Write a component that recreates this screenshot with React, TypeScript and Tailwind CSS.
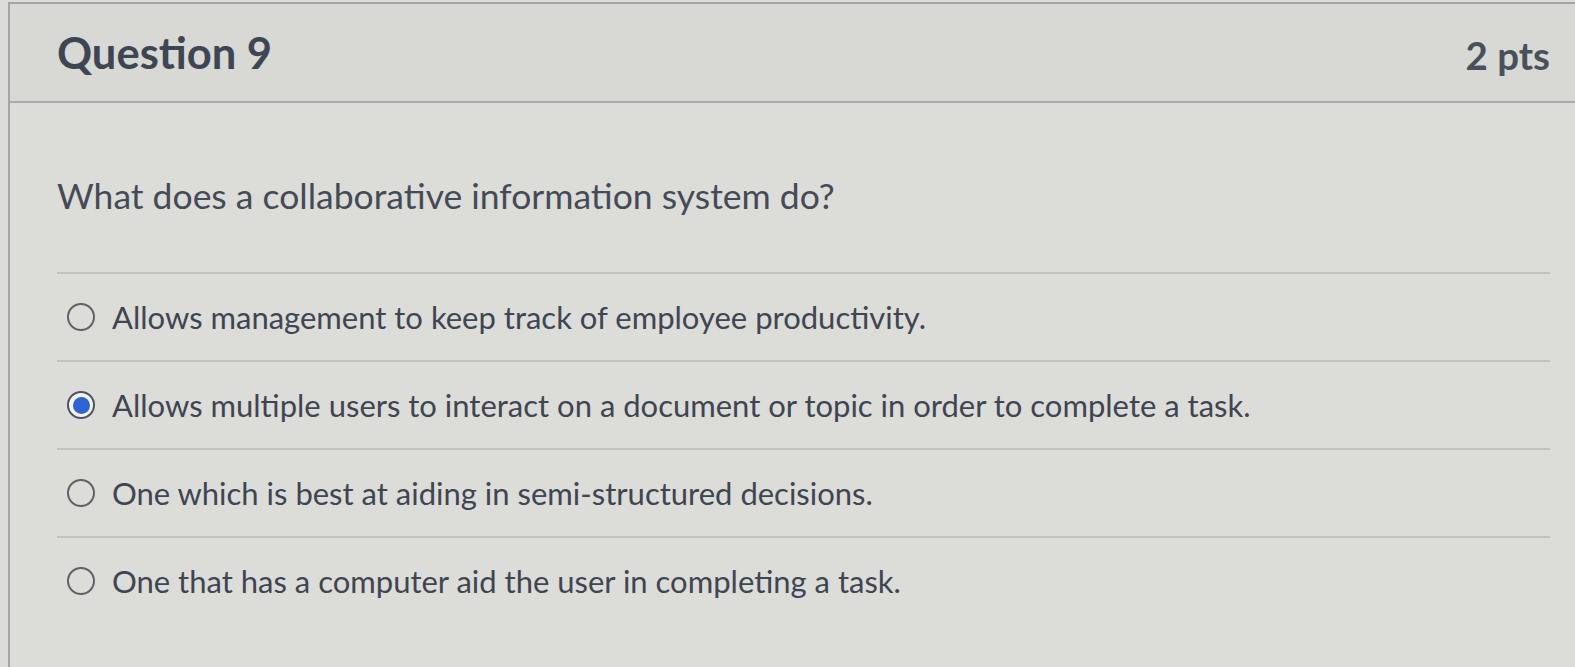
const options = [
  "Allows management to keep track of employee productivity.",
  "Allows multiple users to interact on a document or topic in order to complete a task.",
  "One which is best at aiding in semi-structured decisions.",
  "One that has a computer aid the user in completing a task.",
];

const Radio = ({ checked }: { checked: boolean }) =>
  checked ? (
    <span className="flex h-[28px] w-[28px] shrink-0 items-center justify-center rounded-full border-2 border-[#4d5361] bg-[#f4f4f2]">
      <span className="h-[17px] w-[17px] rounded-full bg-[#2f63d4]" />
    </span>
  ) : (
    <span className="h-[28px] w-[28px] shrink-0 rounded-full border-2 border-[#5d6168]" />
  );

export default function App() {
  const selected = 1;
  return (
    <div className="min-h-[667px] bg-[#dcdcd9] pl-[8px] pt-[2px] font-['Lato',sans-serif] text-[#3f4551]">
      <div className="min-h-[665px] border-l-2 border-t-2 border-[#a3a5a8]">
        <div className="flex h-[99px] items-center justify-between border-b-2 border-[#a9abad] bg-[#d8d8d5] pl-[47px] pr-[25px]">
          <h2 className="text-[43.5px] font-bold leading-none text-[#3f4653]">Question 9</h2>
          <span className="mt-[6px] text-[38.5px] font-bold leading-none text-[#4a505b]">2 pts</span>
        </div>
        <div className="pl-[47px] pr-[25px]">
          <div className="h-[169px] pt-[72px] text-[35.5px] leading-[42px] text-[#454b56]">
            What does a collaborative information system do?
          </div>
          <div>
            {options.map((o, i) => (
              <label
                key={o}
                className="flex h-[88px] items-center gap-[17px] border-t-2 border-[#c2c2c0] pl-[10px] text-[31px]"
              >
                <Radio checked={i === selected} />
                <span>{o}</span>
              </label>
            ))}
          </div>
        </div>
      </div>
    </div>
  );
}
